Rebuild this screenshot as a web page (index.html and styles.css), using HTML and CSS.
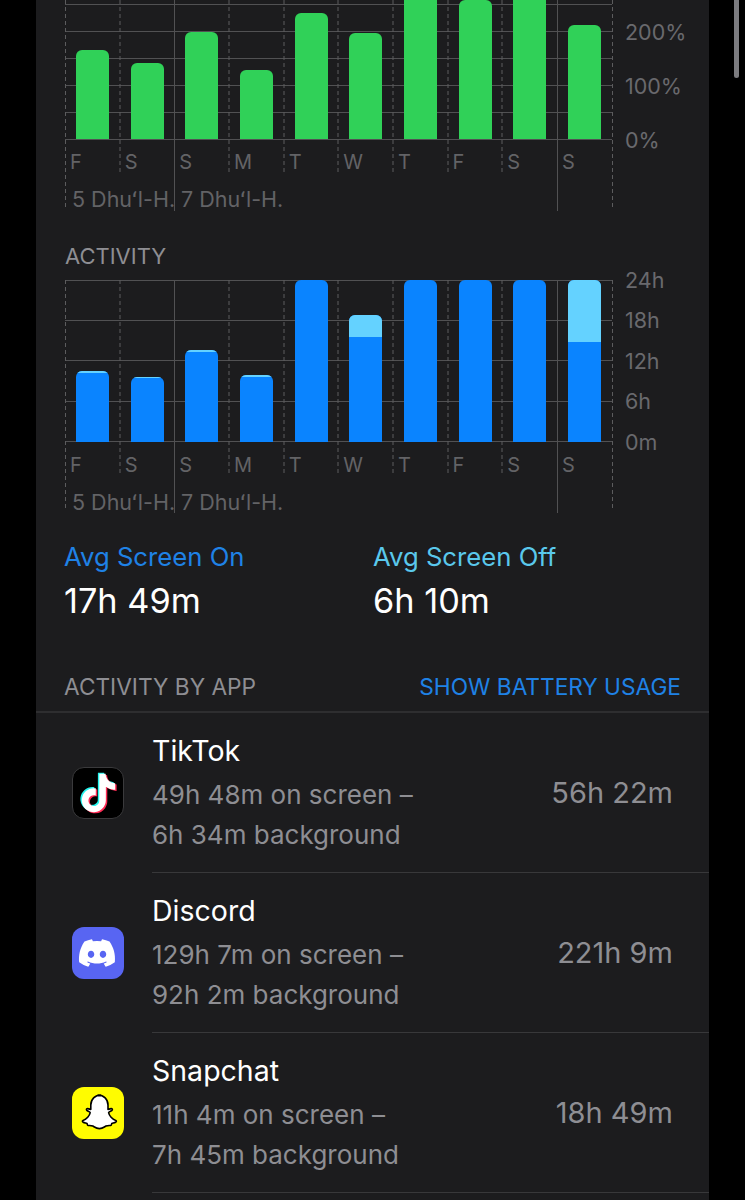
FILE: index.html
```html
<!DOCTYPE html>
<html lang="en">
<head>
    <meta charset="UTF-8">
    <meta name="viewport" content="width=device-width, initial-scale=1.0">
    <title>Battery</title>
    <link rel="stylesheet" href="styles.css">
</head>
<body>

<div class="scrollbar"></div>

<main class="panel">

    <!-- battery level chart, cut off by the top of the screen -->
    <section class="chart chart-level">
        <svg class="grid" width="548" height="211" viewBox="0 0 548 211">
            <path class="line" d="M0 4.5H547M0 31.5H547M0 58.5H547M0 85.5H547M0 112.5H547M0 139.5H547"/>
            <path class="dash" d="M55 0V172M164 0V172M219 0V172M273 0V172M328 0V172M383 0V172M437 0V172M.5 0V207M547.5 0V207"/>
            <path class="line" d="M109.5 0V211M492.5 0V211"/>
        </svg>
        <div class="plot">
            <div class="bars">
                <div class="bar bar-green" style="height: 89px"></div>
                <div class="bar bar-green" style="height: 76px"></div>
                <div class="bar bar-green" style="height: 107px"></div>
                <div class="bar bar-green" style="height: 69px"></div>
                <div class="bar bar-green" style="height: 126px"></div>
                <div class="bar bar-green" style="height: 106px"></div>
                <div class="bar bar-green" style="height: 150px"></div>
                <div class="bar bar-green" style="height: 139px"></div>
                <div class="bar bar-green" style="height: 150px"></div>
                <div class="bar bar-green" style="height: 114px"></div>
            </div>
            <div class="y-axis y-axis-level">
                <span>200%</span>
                <span>100%</span>
                <span>0%</span>
            </div>
        </div>
        <div class="days">
            <span>F</span><span>S</span><span>S</span><span>M</span><span>T</span>
            <span>W</span><span>T</span><span>F</span><span>S</span><span>S</span>
        </div>
        <div class="dates">
            <span>5 Dhuʻl-H.</span>
            <span>7 Dhuʻl-H.</span>
        </div>
    </section>

    <h2 class="chart-title">ACTIVITY</h2>

    <section class="chart chart-activity">
        <svg class="grid" width="548" height="233" viewBox="0 0 548 233">
            <path class="line" d="M0 .5H547M0 40.5H547M0 80.5H547M0 121.5H547M0 161.5H547"/>
            <path class="dash" d="M55 0V194M164 0V194M219 0V194M273 0V194M328 0V194M383 0V194M437 0V194M.5 0V230M547.5 0V230"/>
            <path class="line" d="M109.5 0V233M492.5 0V233"/>
        </svg>
        <div class="plot">
            <div class="bars bars-activity">
                <div class="bar bar-blue" style="height: 71px"><div class="bar-off" style="height: 2px"></div></div>
                <div class="bar bar-blue" style="height: 65px"><div class="bar-off" style="height: 1px"></div></div>
                <div class="bar bar-blue" style="height: 92px"><div class="bar-off" style="height: 2px"></div></div>
                <div class="bar bar-blue" style="height: 67px"><div class="bar-off" style="height: 2px"></div></div>
                <div class="bar bar-blue" style="height: 162px"></div>
                <div class="bar bar-blue" style="height: 127px"><div class="bar-off" style="height: 22px"></div></div>
                <div class="bar bar-blue" style="height: 162px"></div>
                <div class="bar bar-blue" style="height: 162px"></div>
                <div class="bar bar-blue" style="height: 162px"></div>
                <div class="bar bar-blue" style="height: 162px"><div class="bar-off" style="height: 62px"></div></div>
            </div>
            <div class="y-axis y-axis-activity">
                <span>24h</span>
                <span>18h</span>
                <span>12h</span>
                <span>6h</span>
                <span>0m</span>
            </div>
        </div>
        <div class="days">
            <span>F</span><span>S</span><span>S</span><span>M</span><span>T</span>
            <span>W</span><span>T</span><span>F</span><span>S</span><span>S</span>
        </div>
        <div class="dates">
            <span>5 Dhuʻl-H.</span>
            <span>7 Dhuʻl-H.</span>
        </div>
    </section>

    <section class="averages">
        <div class="average">
            <div class="average-label label-on">Avg Screen On</div>
            <div class="average-value">17h 49m</div>
        </div>
        <div class="average">
            <div class="average-label label-off">Avg Screen Off</div>
            <div class="average-value">6h 10m</div>
        </div>
    </section>

    <header class="section-head">
        <span class="section-name">ACTIVITY BY APP</span>
        <span class="section-link">SHOW BATTERY USAGE</span>
    </header>

    <ul class="apps">
        <li class="app">
            <svg class="app-icon" viewBox="0 0 52 52">
                <rect x=".5" y=".5" width="51" height="51" rx="11.5" fill="#000" stroke="#3a3a3c"/>
                <g transform="translate(7.3 6.8) scale(1.6)">
                    <path fill="#25f4ee" transform="translate(-.9 -.7)" d="M12.525.02c1.31-.02 2.61-.01 3.91-.02.08 1.53.63 3.09 1.75 4.17 1.12 1.11 2.7 1.62 4.24 1.79v4.03c-1.44-.05-2.89-.35-4.2-.97-.57-.26-1.1-.59-1.62-.93-.01 2.92.01 5.84-.02 8.75-.08 1.4-.54 2.79-1.35 3.94-1.31 1.92-3.58 3.17-5.91 3.21-1.43.08-2.86-.31-4.08-1.03-2.02-1.19-3.44-3.37-3.65-5.71-.02-.5-.03-1-.01-1.49.18-1.9 1.12-3.72 2.58-4.96 1.66-1.44 3.98-2.13 6.15-1.72.02 1.48-.04 2.96-.04 4.44-.99-.32-2.15-.23-3.02.37-.63.41-1.11 1.04-1.36 1.75-.21.51-.15 1.07-.14 1.61.24 1.64 1.82 3.02 3.5 2.87 1.12-.01 2.19-.66 2.77-1.61.19-.33.4-.67.41-1.06.1-1.79.06-3.57.07-5.36.01-4.03-.01-8.05.02-12.07z"/>
                    <path fill="#fe2c55" transform="translate(.9 .7)" d="M12.525.02c1.31-.02 2.61-.01 3.91-.02.08 1.53.63 3.09 1.75 4.17 1.12 1.11 2.7 1.62 4.24 1.79v4.03c-1.44-.05-2.89-.35-4.2-.97-.57-.26-1.1-.59-1.62-.93-.01 2.92.01 5.84-.02 8.75-.08 1.4-.54 2.79-1.35 3.94-1.31 1.92-3.58 3.17-5.91 3.21-1.43.08-2.86-.31-4.08-1.03-2.02-1.19-3.44-3.37-3.65-5.71-.02-.5-.03-1-.01-1.49.18-1.9 1.12-3.72 2.58-4.96 1.66-1.44 3.98-2.13 6.15-1.72.02 1.48-.04 2.96-.04 4.44-.99-.32-2.15-.23-3.02.37-.63.41-1.11 1.04-1.36 1.75-.21.51-.15 1.07-.14 1.61.24 1.64 1.82 3.02 3.5 2.87 1.12-.01 2.19-.66 2.77-1.61.19-.33.4-.67.41-1.06.1-1.79.06-3.57.07-5.36.01-4.03-.01-8.05.02-12.07z"/>
                    <path fill="#fff" d="M12.525.02c1.31-.02 2.61-.01 3.91-.02.08 1.53.63 3.09 1.75 4.17 1.12 1.11 2.7 1.62 4.24 1.79v4.03c-1.44-.05-2.89-.35-4.2-.97-.57-.26-1.1-.59-1.62-.93-.01 2.92.01 5.84-.02 8.75-.08 1.4-.54 2.79-1.35 3.94-1.31 1.92-3.58 3.17-5.91 3.21-1.43.08-2.86-.31-4.08-1.03-2.02-1.19-3.44-3.37-3.65-5.71-.02-.5-.03-1-.01-1.49.18-1.9 1.12-3.72 2.58-4.96 1.66-1.44 3.98-2.13 6.15-1.72.02 1.48-.04 2.96-.04 4.44-.99-.32-2.15-.23-3.02.37-.63.41-1.11 1.04-1.36 1.75-.21.51-.15 1.07-.14 1.61.24 1.64 1.82 3.02 3.5 2.87 1.12-.01 2.19-.66 2.77-1.61.19-.33.4-.67.41-1.06.1-1.79.06-3.57.07-5.36.01-4.03-.01-8.05.02-12.07z"/>
                </g>
            </svg>
            <div class="app-body">
                <div class="app-text">
                    <div class="app-name">TikTok</div>
                    <div class="app-detail">49h 48m on screen –<br>6h 34m background</div>
                </div>
                <div class="app-total">56h 22m</div>
            </div>
        </li>
        <li class="app">
            <svg class="app-icon" viewBox="0 0 52 52">
                <rect width="52" height="52" rx="12" fill="#5865f2"/>
                <g transform="translate(7 8) scale(1.5)">
                    <path fill="#fff" d="M20.317 4.37a19.791 19.791 0 0 0-4.885-1.515.074.074 0 0 0-.079.037c-.21.375-.444.864-.608 1.25a18.27 18.27 0 0 0-5.487 0 12.64 12.64 0 0 0-.617-1.25.077.077 0 0 0-.079-.037A19.736 19.736 0 0 0 3.677 4.37a.07.07 0 0 0-.032.027C.533 9.046-.32 13.58.099 18.057a.082.082 0 0 0 .031.057 19.9 19.9 0 0 0 5.993 3.03.078.078 0 0 0 .084-.028 14.09 14.09 0 0 0 1.226-1.994.076.076 0 0 0-.041-.106 13.107 13.107 0 0 1-1.872-.892.077.077 0 0 1-.008-.128 10.2 10.2 0 0 0 .372-.292.074.074 0 0 1 .077-.01c3.928 1.793 8.18 1.793 12.062 0a.074.074 0 0 1 .078.01c.12.098.246.198.373.292a.077.077 0 0 1-.006.127 12.299 12.299 0 0 1-1.873.892.077.077 0 0 0-.041.107c.36.698.772 1.362 1.225 1.993a.076.076 0 0 0 .084.028 19.839 19.839 0 0 0 6.002-3.03.077.077 0 0 0 .032-.054c.5-5.177-.838-9.674-3.549-13.66a.061.061 0 0 0-.031-.03zM8.02 15.33c-1.183 0-2.157-1.085-2.157-2.419 0-1.333.956-2.419 2.157-2.419 1.21 0 2.176 1.096 2.157 2.42 0 1.333-.956 2.418-2.157 2.418zm7.975 0c-1.183 0-2.157-1.085-2.157-2.419 0-1.333.955-2.419 2.157-2.419 1.21 0 2.176 1.096 2.157 2.42 0 1.333-.946 2.418-2.157 2.418z"/>
                </g>
            </svg>
            <div class="app-body">
                <div class="app-text">
                    <div class="app-name">Discord</div>
                    <div class="app-detail">129h 7m on screen –<br>92h 2m background</div>
                </div>
                <div class="app-total">221h 9m</div>
            </div>
        </li>
        <li class="app">
            <svg class="app-icon" viewBox="0 0 52 52">
                <rect width="52" height="52" rx="12" fill="#fffc00"/>
                <g transform="translate(2 1.6) scale(2)">
                    <path fill="#fff" stroke="#000" stroke-width=".8" stroke-linejoin="round" d="M12 3.2c2.9 0 5 2.1 5 5v2.2l1.6-.4c.5 0 .8.5.4.9-.5.4-1.6.6-1.7 1.1.3 1.5 1.8 3.4 3.6 3.9.5.2.3.7-.1.9-.6.3-1.5.4-1.9.6-.2.3-.1 1-.5 1-.7.1-1.6-.1-2.4.3-.9.5-1.7 1.3-3.3 1.3s-2.4-.8-3.3-1.3c-.8-.4-1.7-.2-2.4-.3-.4 0-.3-.7-.5-1-.4-.2-1.3-.3-1.9-.6-.4-.2-.6-.7-.1-.9 1.8-.5 3.3-2.4 3.6-3.9-.1-.5-1.2-.7-1.7-1.1-.4-.4-.1-.9.4-.9l1.6.4V8.2c0-2.9 2.1-5 5-5z"/>
                </g>
            </svg>
            <div class="app-body">
                <div class="app-text">
                    <div class="app-name">Snapchat</div>
                    <div class="app-detail">11h 4m on screen –<br>7h 45m background</div>
                </div>
                <div class="app-total">18h 49m</div>
            </div>
        </li>
    </ul>

</main>

</body>
</html>
```

FILE: styles.css
```css
html, body {
    height: 1200px;
    overflow: hidden;
}

body {
    margin: 0;
    background: #000;
    color: #fff;
    font-family: Inter, "Liberation Sans", sans-serif;
}

.panel {
    width: 673px;
    height: 1200px;
    margin-left: 36px;
    background: #1c1c1e;
    overflow: hidden;
}

.scrollbar {
    position: absolute;
    top: 0;
    left: 734px;
    width: 5px;
    height: 78px;
    border-radius: 0 0 3px 3px;
    background: #7c7c80;
}

/* charts */
.chart {
    position: relative;
    margin-left: 29px;
}

.chart-level {
    height: 211px;
}

.chart-activity {
    height: 233px;
}

.grid {
    position: absolute;
    top: 0;
    left: 0;
}

.line {
    fill: none;
    stroke: #515153;
    stroke-width: 1;
}

.dash {
    fill: none;
    stroke: #5c5c5e;
    stroke-width: 1;
    stroke-dasharray: 4 3;
}

.plot {
    position: relative;
    display: flex;
}

.bars {
    display: flex;
    align-items: flex-end;
    gap: 21.67px;
    width: 547px;
    height: 139px;
    padding-left: 11px;
    box-sizing: border-box;
    overflow: hidden;
}

.bars-activity {
    height: 162px;
}

.bar {
    flex: 0 0 33px;
    border-radius: 6px 6px 0 0;
    overflow: hidden;
}

.bar-green {
    background: #30d158;
}

.bar-blue {
    background: #0a84ff;
}

.bar-off {
    background: #64d2ff;
}

.y-axis {
    display: flex;
    flex-direction: column;
    margin-left: 13px;
    color: #69696d;
    font-size: 21.5px;
}

.y-axis-level {
    height: 139px;
    padding-top: 5px;
    line-height: 54px;
    box-sizing: border-box;
}

.y-axis-activity {
    height: 162px;
    margin-top: -20px;
    line-height: 40.4px;
}

.days {
    position: relative;
    display: grid;
    grid-template-columns: repeat(10, 54.67px);
    height: 40px;
    padding-top: 7px;
    box-sizing: border-box;
    line-height: 33px;
    color: #636366;
    font-size: 20px;
}

.days span {
    padding-left: 5px;
}

.dates {
    position: relative;
    display: flex;
    padding-left: 7px;
    line-height: 40px;
    color: #636366;
    font-size: 21.5px;
}

.dates span {
    width: 109px;
    white-space: nowrap;
}

.chart-title {
    margin: 30px 0 9px 29px;
    color: #8e8e93;
    font-size: 22px;
    font-weight: 400;
    line-height: 30px;
}

/* averages */
.averages {
    display: flex;
    margin: 29px 0 0 28px;
}

.average {
    width: 309px;
}

.average-label {
    font-size: 25.7px;
    line-height: 30px;
}

.label-on {
    color: #1f82e6;
}

.label-off {
    color: #5ac8ec;
}

.average-value {
    margin-top: 7px;
    font-size: 34.3px;
    line-height: 44px;
}

/* activity by app */
.section-head {
    display: flex;
    justify-content: space-between;
    margin-top: 49px;
    padding: 0 28px 9px;
    border-bottom: 2px solid #2e2e30;
    font-size: 22.7px;
    line-height: 30px;
}

.section-name {
    color: #8e8e93;
}

.section-link {
    color: #1f82e6;
}

.apps {
    margin: 0;
    padding: 0;
    list-style: none;
}

.app {
    display: flex;
    align-items: center;
    height: 160px;
}

.app-icon {
    flex: 0 0 52px;
    width: 52px;
    height: 52px;
    margin: 0 28px 0 36px;
}

.app-body {
    display: flex;
    flex: 1;
    align-items: center;
    justify-content: space-between;
    height: 160px;
    padding-right: 36px;
    box-sizing: border-box;
    border-bottom: 1px solid #38383a;
}

.app-text {
    margin-top: 4px;
}

.app-name {
    margin-bottom: 7px;
    font-size: 28.5px;
    line-height: 34px;
}

.app-detail {
    color: #8e8e93;
    font-size: 26px;
    line-height: 40px;
}

.app-total {
    color: #8e8e93;
    font-size: 29px;
}
```
